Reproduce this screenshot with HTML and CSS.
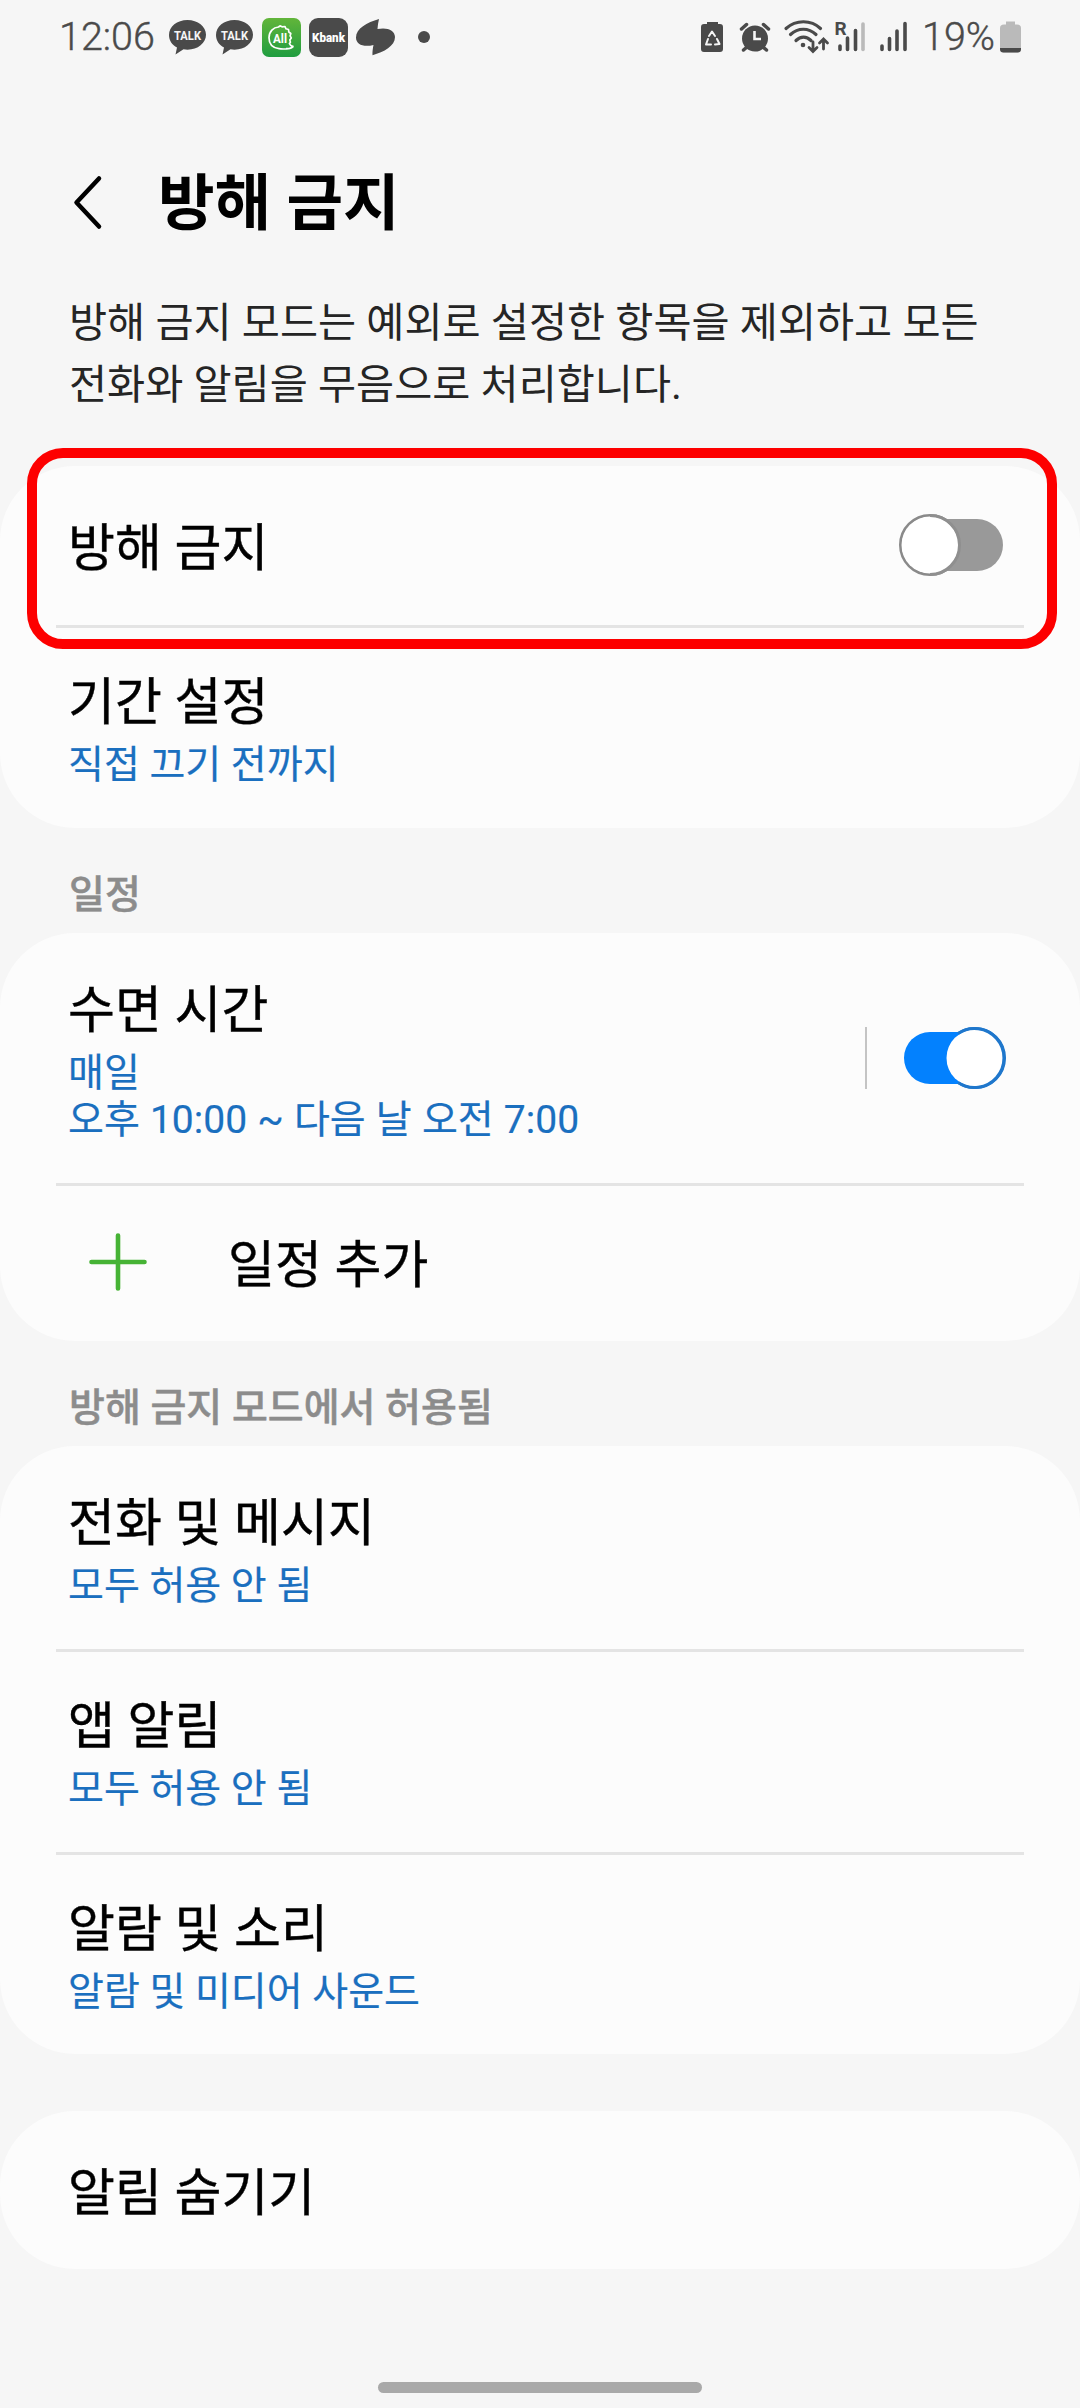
FILE: index.html
```html
<!DOCTYPE html>
<html lang="ko">
<head>
<meta charset="utf-8">
<title>방해 금지</title>
<link rel="stylesheet" href="styles.css">
</head>
<body>
<div class="screen">
  <header class="status">
    <span class="clock">12:06</span>
    <svg class="notices" width="272" height="48" viewBox="160 0 272 48">
      <g fill="#4a4a4a">
        <path id="talk" d="M187.500 20C177 20 169 26.500 169 35c0 5.500 3.200 10 8 12.600L175.500 54.500l8-5.200c1.300.3 2.600.4 4 .4 10.300 0 18.500-6.600 18.500-14.900S197.800 20 187.500 20z"/>
        <use href="#talk" x="47"/>
      </g>
      <g class="tiny" fill="#f6f6f6" text-anchor="middle">
        <text x="187.500" y="40" textLength="27" lengthAdjust="spacingAndGlyphs">TALK</text>
        <text x="234.500" y="40" textLength="27" lengthAdjust="spacingAndGlyphs">TALK</text>
      </g>
      <defs><linearGradient id="leaf" x1="0" y1="0" x2="0" y2="1"><stop offset="0" stop-color="#62b53a"/><stop offset="1" stop-color="#1f9d40"/></linearGradient></defs>
      <rect x="262" y="18" width="39" height="39" rx="7" fill="url(#leaf)"/>
      <path d="M293 45.500c-1 2.500-3 3.300-6 3.300-3 .3-5.500.3-8-.1-6.500-.8-10-5-10-10.900 0-6.500 4.500-10.500 9.500-10.800l1.500-1.200 2 1 3-.3 1 2.300 2.500.7.300 2.500 2 1.500-.7 2.400 1.200 2-1.500 2 .6 2.300-1 1.300c.5 1.500 1.500 2.500 3.600 3.200-1.500 1.700-4.500 2.100-7 2" fill="none" stroke="#fff" stroke-width="1.700" stroke-linejoin="round"/>
      <text class="badge" x="280" y="42.500" fill="#fff" text-anchor="middle" textLength="14" lengthAdjust="spacingAndGlyphs">All</text>
      <rect x="309" y="18" width="39" height="39" rx="9" fill="#4a4a4a"/>
      <text class="tiny kbank" x="328.500" y="42" fill="#fff" text-anchor="middle" textLength="33" lengthAdjust="spacingAndGlyphs">Kbank</text>
      <path d="M379 19c-12 3.500-23 9.500-23 18.500 0 7 7.500 10 17.500 7.500-.8 4-1.200 7-1 10.200C384 52 395 46 395 37c0-7-8-10-17.500-8 .2-3.500.7-6.500 1.500-10z" fill="#4a4a4a"/>
      <circle cx="424" cy="37" r="6" fill="#4a4a4a"/>
    </svg>
    <svg class="signals" width="226" height="48" viewBox="696 0 226 48">
      <path d="M707 24v-2h11v2h2q3 0 3 3v22q0 3-3 3h-16q-3 0-3-3V27q0-3 3-3z" fill="#4a4a4a"/>
      <path d="M709 36l3-4.500 3 4.500M717 39l2.500 5-4.500.5M711 44.500h-5l2-5.500" fill="none" stroke="#f6f6f6" stroke-width="2" stroke-linejoin="round" stroke-linecap="round"/>
      <g fill="none" stroke="#4a4a4a" stroke-linecap="round">
        <circle cx="755" cy="38.500" r="13" fill="#4a4a4a" stroke="none"/>
        <path d="M741.500 29l5-4.500M763.500 24.500l5 4.500M747 47l-3.500 3M763 47l3.500 3" stroke-width="3.500"/>
        <path d="M754.500 31v8h6.500" stroke="#f6f6f6" stroke-width="2.600" stroke-linecap="butt"/>
        <path d="M786 28.500c10-9 25-9 34.500 0M790.500 34.500c7.500-7 18-7 25.500 0M796 40.500c4.500-4.500 10.500-4.500 15 0" stroke-width="3.200"/>
        <circle cx="803" cy="45" r="2.300" fill="#4a4a4a" stroke="none"/>
        <path d="M813 42v9M809 47.500l4 4 4-4M823.500 49V39.500M819.500 43l4-4 4 4" stroke-width="2.800"/>
        <path d="M840 46v3.500M847.500 38v11.500M855.500 30.500v19M882 46v3.500M889.500 38.500v11M897 31v18.500M905 23.500v26" stroke-width="3.600"/>
        <path d="M863 24v25.500" stroke="#bababa" stroke-width="3.600"/>
      </g>
      <text class="roam" x="834.500" y="35" fill="#4a4a4a">R</text>
    </svg>
    <span class="percent">19%</span>
    <svg class="cell" width="22" height="48" viewBox="1000 0 22 48">
      <path d="M1006 24.500v-3h9v3h2q4 0 4 3.500v21q0 3.500-3.500 3.500h-14q-3.500 0-3.500-3.500V28q0-3.500 4-3.500z" fill="#bababa"/>
      <path d="M1000 48h21v1q0 3.500-3.500 3.500h-14q-3.500 0-3.500-3.500z" fill="#4a4a4a"/>
    </svg>
  </header>

  <div class="titlebar">
    <svg width="30" height="56" viewBox="0 0 30 56"><path d="M27 2.500L4.500 26.500l22.500 24" fill="none" stroke="#000" stroke-width="4.500" stroke-linecap="round" stroke-linejoin="round"/></svg>
    <h1>방해 금지</h1>
  </div>
  <p class="intro">방해 금지 모드는 예외로 설정한 항목을 제외하고 모든<br>전화와 알림을 무음으로 처리합니다.</p>

  <section class="card">
    <div class="row single master">
      <div class="name">방해 금지</div>
      <svg width="106" height="62" viewBox="0 0 106 62"><circle cx="31" cy="31" r="29.500" fill="none" stroke="#8a8a8a" stroke-width="3"/><path d="M31 5h47a26 26 0 0 1 0 52H31z" fill="#999"/><circle cx="31" cy="31" r="28.500" fill="#fff"/><path d="M31 1.500a29.500 29.500 0 0 1 0 59" fill="none" stroke="#8f8f8f" stroke-width="3"/></svg>
      <div class="highlight"></div>
    </div>
    <div class="row">
      <div class="name">기간 설정</div>
      <div class="value">직접 끄기 전까지</div>
    </div>
  </section>

  <h2>일정</h2>
  <section class="card">
    <div class="row split">
      <div>
        <div class="name">수면 시간</div>
        <div class="value hours">매일<br>오후 10:00 ~ 다음 날 오전 7:00</div>
      </div>
      <div class="control">
        <span class="bar"></span>
        <svg width="104" height="62" viewBox="2 0 104 62"><circle cx="75" cy="31" r="29.500" fill="none" stroke="#1f77cc" stroke-width="3"/><path d="M75 5H30a26 26 0 0 0 0 52h45z" fill="#0381fe"/><circle cx="75" cy="31" r="28.500" fill="#fff"/><path d="M58 6.500a29.500 29.500 0 1 1 0 49" fill="none" stroke="#1f77cc" stroke-width="3"/></svg>
      </div>
    </div>
    <div class="row add">
      <svg width="58" height="58" viewBox="0 0 58 58"><path d="M29 2.500v53M2.500 29h53" stroke="#46b335" stroke-width="4.600" stroke-linecap="round"/></svg>
      <div class="name">일정 추가</div>
    </div>
  </section>

  <h2>방해 금지 모드에서 허용됨</h2>
  <section class="card allowed">
    <div class="row">
      <div class="name">전화 및 메시지</div>
      <div class="value">모두 허용 안 됨</div>
    </div>
    <div class="row">
      <div class="name">앱 알림</div>
      <div class="value">모두 허용 안 됨</div>
    </div>
    <div class="row">
      <div class="name">알람 및 소리</div>
      <div class="value">알람 및 미디어 사운드</div>
    </div>
  </section>

  <section class="card last">
    <div class="row single">
      <div class="name">알림 숨기기</div>
    </div>
  </section>

  <div class="home"></div>
</div>
</body>
</html>
```
FILE: styles.css
```css
* { box-sizing: border-box; margin: 0; padding: 0; }
body { background: #f6f6f6; font-family: Roboto, "Noto Sans CJK KR", sans-serif; color: #000; }
svg { display: block; flex: none; overflow: visible; }
.screen { width: 1080px; height: 2408px; display: flex; flex-direction: column; overflow: hidden; }

.status { height: 72px; display: flex; align-items: flex-start; padding: 0 58px 0 59px; color: #4a4a4a; font-size: 39.500px; font-weight: 300; line-height: 74px; white-space: nowrap; -webkit-text-stroke: 0.4px #4a4a4a; }
.status svg { -webkit-text-stroke: 0; }
.clock { width: 101px; }
.signals { margin-left: 264px; }
.percent { width: 78px; }
.tiny { font-size: 13px; font-weight: 700; }
.kbank { font-weight: 900; }
.badge { font-size: 13px; font-weight: 700; }
.roam { font-size: 19px; font-weight: 700; }

.titlebar { height: 206px; padding: 57px 0 0 72px; display: flex; align-items: center; gap: 56px; }
h1 { font-size: 61.500px; line-height: 80px; font-weight: 700; }
.intro { height: 188px; padding: 14px 69px 0; font-size: 41.400px; line-height: 62px; color: #252525; white-space: nowrap; }

.card { background: #fcfcfc; border-radius: 75px; }
.row { position: relative; padding: 38px 68px 0; height: 203px; }
.row + .row::before { content: ""; display: block; height: 3px; margin: -38px -12px 35px; background: #e4e4e4; }
.name { font-size: 51px; line-height: 79px; white-space: nowrap; -webkit-text-stroke: 0.4px #000; }
.value { font-size: 39px; line-height: 47px; color: #1a6fbf; white-space: nowrap; -webkit-text-stroke: 0.2px #1a6fbf; }
.hours { word-spacing: 0.5px; }
.single { display: flex; align-items: center; justify-content: space-between; height: 159px; padding-top: 0; }
.single .name { padding-top: 6px; }
.master { padding-right: 75px; padding-bottom: 1px; }
.highlight { position: absolute; left: 27px; top: -18px; width: 1030px; height: 201px; border: 10px solid #fd0000; border-radius: 36px; }
h2 { font-size: 39px; line-height: 48px; padding: 43px 69px 14px; height: 105px; font-weight: 500; color: #8c8c8c; white-space: nowrap; -webkit-text-stroke: 0.5px #8c8c8c; }
.split { height: 250px; display: flex; justify-content: space-between; padding-right: 74px; }
.control { display: flex; gap: 35px; padding-top: 56px; }
.bar { width: 2px; height: 62px; background: #c4c4c4; }
.row.add { height: 158px; padding: 0 0 0 89px; display: grid; grid-template: 3px 151px / 58px auto; column-gap: 81px; align-items: center; }
.row.add::before { margin: 0 56px 0 -33px; grid-column: 1 / -1; }
.add .name { padding-top: 7px; }
.allowed .row:last-child { height: 202px; }
.last { margin-top: 57px; }
.last .single { height: 158px; }
.home { width: 324px; height: 11px; border-radius: 6px; background: #a9a9a9; margin: 113px auto 0; }
```
